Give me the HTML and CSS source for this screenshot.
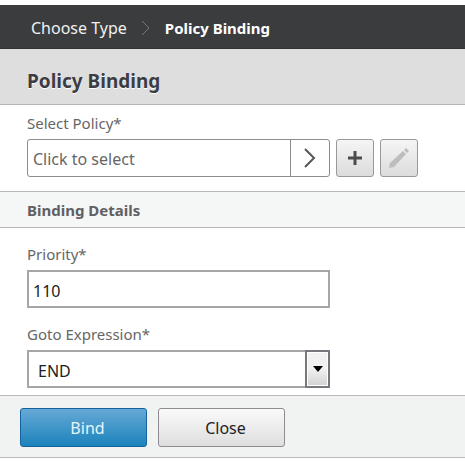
FILE: index.html
```html
<!DOCTYPE html>
<html lang="en">
<head>
<meta charset="utf-8">
<meta name="viewport" content="width=device-width, initial-scale=1">
<title>Policy Binding</title>
<link rel="stylesheet" href="styles.css">
</head>
<body>
<nav class="breadcrumb" aria-label="Breadcrumb">
  <a class="crumb" href="#">Choose Type</a>
  <svg class="crumb-arrow" width="10" height="16" viewBox="0 0 10 16" aria-hidden="true"><path d="M1 1l7 7-7 7"/></svg>
  <a class="crumb crumb-current" href="#" aria-current="page">Policy Binding</a>
</nav>
<main>
  <h1 class="title">Policy Binding</h1>
  <form>
    <section class="group group-policy">
      <label class="label" for="policy">Select Policy*</label>
      <div class="picker-row">
        <div class="picker">
          <input class="picker-input" id="policy" type="text" placeholder="Click to select" readonly>
          <button class="picker-open" type="button" aria-label="Choose">
            <svg width="12" height="20" viewBox="0 0 12 20"><path class="chevron" d="M1 1l9 9-9 9"/></svg>
          </button>
        </div>
        <button class="icon-button" type="button" aria-label="Add">
          <svg width="14" height="14" viewBox="0 0 14 14"><path class="plus" d="M7 0v14M0 7h14"/></svg>
        </button>
        <button class="icon-button" type="button" aria-label="Edit" disabled>
          <svg width="20" height="20" viewBox="0 0 20 20"><path class="pencil" d="M0 20l1-5L14 3l3 3L5 19zM15 2l2-2 3 3-2 2z"/></svg>
        </button>
      </div>
    </section>
    <h2 class="subtitle">Binding Details</h2>
    <section class="group group-details">
      <div class="field">
        <label class="label" for="priority">Priority*</label>
        <input class="control" id="priority" type="text" value="110">
      </div>
      <div class="field">
        <label class="label" for="goto">Goto Expression*</label>
        <div class="select">
          <select class="control select-control" id="goto"><option>END</option></select>
          <span class="select-arrow" aria-hidden="true"><svg width="10" height="6" viewBox="0 0 10 6"><path d="M0 0h10L5 6z"/></svg></span>
        </div>
      </div>
    </section>
    <footer class="actions">
      <button class="button button-primary" type="submit">Bind</button>
      <button class="button" type="button">Close</button>
    </footer>
  </form>
</main>
</body>
</html>
```
FILE: styles.css
```css
* { box-sizing: border-box; }

body {
  margin: 0;
  padding-top: 5px;
  background: #fff;
  color: #666;
  font: 16px/20px "Noto Sans", "Open Sans", sans-serif;
}

h1, h2 { margin: 0; }

button, input, select { font: inherit; margin: 0; }

.breadcrumb {
  display: flex;
  align-items: center;
  gap: 14px;
  height: 44px;
  padding: 2px 31px 0;
  background: #3b3c3e;
  border-bottom: 1px solid #303133;
}

.crumb { color: #f0f0f0; text-decoration: none; white-space: nowrap; }
.crumb-current { color: #fff; font-size: 15px; font-weight: 700; }
.crumb-arrow { fill: none; stroke: #77787a; }

.title {
  height: 56px;
  padding: 22px 27px 0;
  background: #dedede;
  border-bottom: 1px solid #b5b5b5;
  color: #3c3c43;
  font-size: 19px;
  line-height: 20px;
  text-shadow: 0 1px 0 #fff;
}

.label { display: block; margin-bottom: 6px; font-size: 15px; }

.group { padding-left: 27px; padding-right: 27px; }
.group-policy { padding-top: 8px; padding-bottom: 14px; }

.picker-row { display: flex; gap: 6px; }

.picker {
  display: flex;
  flex: 0 1 303px;
  height: 38px;
  border: 1px solid #8c8c8c;
  border-radius: 3px;
}

.picker-input {
  flex: 1;
  min-width: 0;
  padding: 2px 5px 0;
  border: 0;
  background: none;
  color: #666;
}
.picker-input::placeholder { color: #666; opacity: 1; }

.picker-open {
  display: grid;
  place-items: center;
  width: 39px;
  padding: 0;
  border: 0;
  border-left: 1px solid #8c8c8c;
  background: none;
}

.chevron { fill: none; stroke: #55565a; stroke-width: 2; }

.icon-button {
  display: grid;
  place-items: center;
  flex: none;
  width: 38px;
  height: 38px;
  padding: 0;
  border: 1px solid #999;
  border-radius: 3px;
  background: linear-gradient(#f5f5f5, #dcdcdc);
}
.plus { fill: none; stroke: #4b4b4d; stroke-width: 3; }
.pencil { fill: #bdbdbd; }

.subtitle {
  height: 37px;
  padding: 8px 27px;
  background: #f5f6f6;
  border: solid #b8b8b8;
  border-width: 1px 0;
  color: #606062;
  font-size: 15px;
  line-height: 20px;
}

.group-details {
  display: grid;
  gap: 16px;
  padding-top: 16px;
  padding-bottom: 7px;
}

.field { max-width: 303px; }

.control {
  display: block;
  width: 100%;
  height: 38px;
  padding: 4px 4px 0;
  border: 2px solid #a6a6a6;
  border-radius: 0;
  background: #fff;
  color: #222;
}

.select { position: relative; }
.select-control { appearance: none; padding-left: 9px; padding-right: 28px; }

.select-arrow {
  position: absolute;
  top: 0;
  right: 0;
  bottom: 0;
  display: grid;
  place-items: center;
  width: 25px;
  border: 2px solid #77777d;
  background: linear-gradient(#f1f1f1 50%, #d2d2d2);
  box-shadow: inset 0 0 0 1px #fff;
  pointer-events: none;
}

.actions {
  display: flex;
  gap: 11px;
  padding: 12px 20px 10px;
  background: #f1f2f2;
  border: solid #b9b9b9;
  border-width: 1px 0;
}

.button {
  flex: 0 1 127px;
  height: 39px;
  padding: 0 0 0 8px;
  border: 1px solid #8f8b90;
  border-radius: 3px;
  background: linear-gradient(#fafafa, #dedede);
  color: #222;
}

.button-primary {
  border-color: #14639f;
  background: linear-gradient(#66a9d6, #1b83bb);
  color: #e8f4fb;
}
```
